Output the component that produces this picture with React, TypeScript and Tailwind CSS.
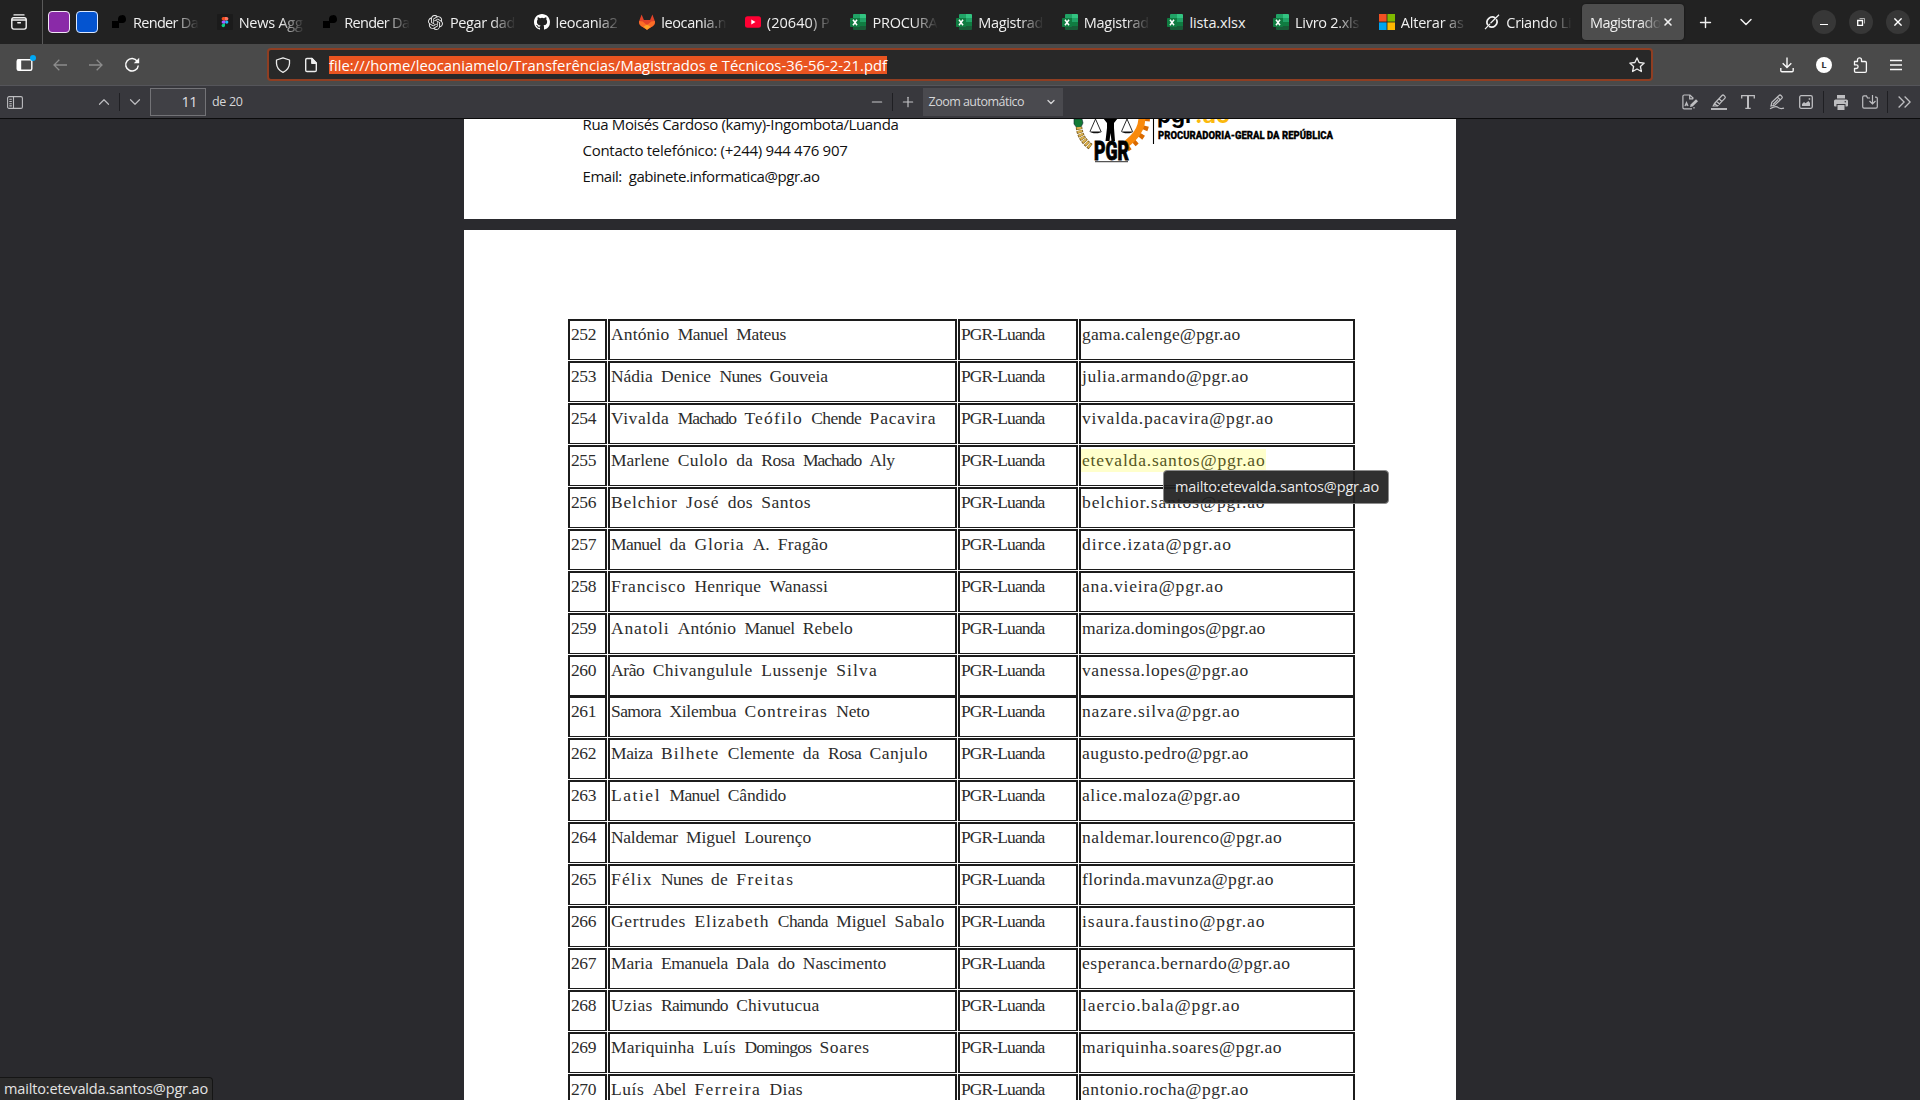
import React from "react";
import { Plus, Minus, ChevronDown, ChevronUp, X } from "lucide-react";

const UI = '"Open Sans", sans-serif';
const SERIF = '"Liberation Serif", serif';
const PITCH = 8.34;

let ctx: CanvasRenderingContext2D | null = null;

/** Letter spacing that makes `text` exactly `width` pixels wide. */
function tracking(text: string, size: number, family: string, width: number) {
  if (!ctx) ctx = document.createElement("canvas").getContext("2d");
  if (!ctx) return "0px";
  ctx.font = `${size}px ${family}`;
  return `${((width - ctx.measureText(text).width) / text.length).toFixed(3)}px`;
}

function Fit({ text, w, size = 14.5, family = UI, className = "" }: { text: string; w: number; size?: number; family?: string; className?: string }) {
  return (
    <span
      className={`whitespace-pre ${className}`}
      style={{ fontFamily: family, fontSize: `${size}px`, letterSpacing: tracking(text, size, family, w) }}
    >
      {text}
    </span>
  );
}

/** Fixed pitch serif text: each word occupies a whole number of character cells. */
function Mono({ text }: { text: string }) {
  const parts = text.split(/( )/);
  return (
    <span className="whitespace-pre">
      {parts.map((p, i) => (
        <Fit key={i} text={p} w={p.length * PITCH} size={17.5} family={SERIF} />
      ))}
    </span>
  );
}

/* ---------- tab icons ---------- */
const RenderIcon = () => (
  <svg viewBox="0 0 16 16" className="size-4"><path d="M1 7h6V5a4 4 0 1 1 5 4h-4v5H1z" fill="#000" /></svg>
);
const FigmaIcon = () => (
  <svg viewBox="0 0 16 16" className="size-4">
    <rect width="16" height="16" rx="1" fill="#1b1b1b" />
    <path d="M8 3H6.3a1.7 1.7 0 0 0 0 3.4H8z" fill="#f24e1e" />
    <path d="M8 3h1.7a1.7 1.7 0 0 1 0 3.4H8z" fill="#ff7262" />
    <path d="M8 6.4H6.3a1.7 1.7 0 0 0 0 3.4H8z" fill="#a259ff" />
    <circle cx="9.7" cy="8.1" r="1.7" fill="#1abcfe" />
    <path d="M6.3 9.8H8v1.7a1.7 1.7 0 1 1-1.7-1.7z" fill="#0acf83" />
  </svg>
);
const GptIcon = () => (
  <svg viewBox="0 0 24 24" className="size-[15px]" fill="#e8e8e8">
    <path d="M22.28 9.82a5.98 5.98 0 0 0-.52-4.91 6.05 6.05 0 0 0-6.51-2.9A6.07 6.07 0 0 0 4.98 4.18a5.98 5.98 0 0 0-4 2.9 6.05 6.05 0 0 0 .74 7.1 5.98 5.98 0 0 0 .51 4.91 6.05 6.05 0 0 0 6.51 2.9A5.98 5.98 0 0 0 13.26 24a6.06 6.06 0 0 0 5.77-4.21 5.99 5.99 0 0 0 4-2.9 6.06 6.06 0 0 0-.75-7.07zm-9.02 12.61a4.48 4.48 0 0 1-2.88-1.04l.14-.08 4.78-2.76a.79.79 0 0 0 .39-.68v-6.74l2.02 1.17a.07.07 0 0 1 .04.05v5.58a4.5 4.5 0 0 1-4.49 4.5zM3.6 18.3a4.47 4.47 0 0 1-.54-3.01l.14.08 4.78 2.76a.77.77 0 0 0 .78 0l5.84-3.37v2.33a.08.08 0 0 1-.03.06L9.74 19.95A4.5 4.5 0 0 1 3.6 18.3zM2.34 7.9a4.49 4.49 0 0 1 2.37-1.98V11.6a.77.77 0 0 0 .39.68l5.81 3.35-2.02 1.17a.08.08 0 0 1-.07 0l-4.83-2.79A4.5 4.5 0 0 1 2.34 7.87zm16.6 3.86-5.84-3.39L15.12 7.2a.08.08 0 0 1 .07 0l4.83 2.79a4.49 4.49 0 0 1-.68 8.1v-5.68a.79.79 0 0 0-.4-.65zm2-3.03-.14-.08-4.77-2.78a.78.78 0 0 0-.79 0L9.41 9.23V6.9a.07.07 0 0 1 .03-.06l4.83-2.79a4.5 4.5 0 0 1 6.68 4.66zM8.31 12.86 6.29 11.7a.08.08 0 0 1-.04-.06V6.07a4.5 4.5 0 0 1 7.38-3.45l-.14.08L8.7 5.46a.79.79 0 0 0-.39.68zm1.1-2.37L12.01 9l2.61 1.5v3l-2.6 1.5-2.61-1.5z" />
  </svg>
);
const GithubIcon = () => (
  <svg viewBox="0 0 16 16" className="size-4" fill="#fff">
    <path d="M8 0C3.58 0 0 3.58 0 8c0 3.54 2.29 6.53 5.47 7.59.4.07.55-.17.55-.38 0-.19-.01-.82-.01-1.49-2.01.37-2.53-.49-2.69-.94-.09-.23-.48-.94-.82-1.13-.28-.15-.68-.52-.01-.53.63-.01 1.08.58 1.23.82.72 1.21 1.87.87 2.33.66.07-.52.28-.87.51-1.07-1.78-.2-3.64-.89-3.64-3.95 0-.87.31-1.59.82-2.15-.08-.2-.36-1.02.08-2.12 0 0 .67-.21 2.2.82a7.6 7.6 0 0 1 4 0c1.53-1.04 2.2-.82 2.2-.82.44 1.1.16 1.92.08 2.12.51.56.82 1.27.82 2.15 0 3.07-1.87 3.75-3.65 3.95.29.25.54.73.54 1.48 0 1.07-.01 1.93-.01 2.2 0 .21.15.46.55.38A8.01 8.01 0 0 0 16 8c0-4.42-3.58-8-8-8z" />
  </svg>
);
const GitlabIcon = () => (
  <svg viewBox="0 0 16 16" className="size-4">
    <path d="M2.6.6 4.9 6h6.2L13.4.6 15.8 7q.8 3-1.8 5l-6 3.8L2 12Q-.6 10 .2 7z" fill="#e24329" />
    <path d="m.2 7 3.6.5L8 11.3l4.200-3.800 3.600-.5q.8 3-1.800 5L8 15.800 2 12Q-.6 10 .2 7z" fill="#fc6d26" />
    <path d="M4.500 12.800 8 10.500l3.500 2.300L8 15.800z" fill="#fca326" />
  </svg>
);
const YoutubeIcon = () => (
  <svg viewBox="0 0 16 16" className="size-4">
    <rect y="2.300" width="16" height="11.400" rx="2.500" fill="#f03" />
    <path d="M6.300 5.600v4.800L10.500 8z" fill="#fff" />
  </svg>
);
const ExcelIcon = () => (
  <svg viewBox="0 0 16 16" className="size-4">
    <path d="M4 0h6v4H3V1q0-1 1-1z" fill="#21a366" />
    <path d="M10 0h5q1 0 1 1v3h-6z" fill="#33c481" />
    <path d="M3 4h7v4H3z" fill="#107c41" />
    <path d="M10 4h6v4h-6z" fill="#21a366" />
    <path d="M3 8h7v8H4q-1 0-1-1z" fill="#185c37" />
    <path d="M10 8h6v4h-6z" fill="#107c41" />
    <path d="M10 12h6v3q0 1-1 1h-5z" fill="#185c37" />
    <rect y="4" width="10" height="9" rx=".8" fill="#107c41" />
    <path d="m3 5.800 4 5.400M7 5.800l-4 5.400" stroke="#fff" strokeWidth="1.500" />
  </svg>
);
const MicrosoftIcon = () => (
  <svg viewBox="0 0 16 16" className="size-4">
    <path d="M0 0h7.600v7.600H0z" fill="#f25022" />
    <path d="M8.400 0H16v7.600H8.400z" fill="#7fba00" />
    <path d="M0 8.400h7.600V16H0z" fill="#00a4ef" />
    <path d="M8.400 8.400H16V16H8.400z" fill="#ffb900" />
  </svg>
);
const GrokIcon = () => (
  <svg viewBox="0 0 16 16" className="size-4" fill="none" stroke="#f2f2f2" strokeWidth="1.700">
    <path d="M11.300 4A5.300 5.300 0 0 0 3.900 11.300M4.900 12.300A5.300 5.300 0 0 0 12.300 5.200" />
    <path d="M1 15.200 6 9.800M6.500 9.200 15 .8" strokeWidth="1.200" />
  </svg>
);

const tabs: { icon: () => React.ReactElement; text: string; w: number }[] = [
  { icon: RenderIcon, text: "Render Da", w: 65 },
  { icon: FigmaIcon, text: "News Agg", w: 64 },
  { icon: RenderIcon, text: "Render Da", w: 65 },
  { icon: GptIcon, text: "Pegar dad", w: 65 },
  { icon: GithubIcon, text: "leocania2", w: 62 },
  { icon: GitlabIcon, text: "leocania.n", w: 65 },
  { icon: YoutubeIcon, text: "(20640) P", w: 63 },
  { icon: ExcelIcon, text: "PROCURA", w: 65 },
  { icon: ExcelIcon, text: "Magistrad", w: 65 },
  { icon: ExcelIcon, text: "Magistrad", w: 65 },
  { icon: ExcelIcon, text: "lista.xlsx", w: 56 },
  { icon: ExcelIcon, text: "Livro 2.xls", w: 64 },
  { icon: MicrosoftIcon, text: "Alterar as", w: 63 },
  { icon: GrokIcon, text: "Criando Li", w: 65 },
];

function TabBar() {
  return (
    <div className="flex h-11 items-center bg-[#222] text-[#f0f0f0]">
      <div className="flex h-11 w-[43px] items-center justify-center border-r border-[#5a5a5a] pr-1">
        <svg viewBox="0 0 16 16" className="size-4" fill="none" stroke="#f4f4f4" strokeWidth="1.400" strokeLinecap="round">
          <path d="M3 .9h10" />
          <rect x=".8" y="3.800" width="14.400" height="11.300" rx="2" />
          <path d="M1 6h14M6.800 8.800h2.600" />
        </svg>
      </div>
      <div className="ml-[5px] size-[22px] rounded-[4px] border border-[#f0e6f5] bg-[#8a2aa8]" />
      <div className="ml-1.5 size-[22px] rounded-[4px] border border-[#dbe8ff] bg-[#0454d0]" />
      <div className="ml-[13px] flex">
        {tabs.map((t, i) => (
          <div key={i} className="flex h-11 w-[105.650px] items-center">
            <div className="flex w-4 shrink-0 justify-center"><t.icon /></div>
            <div className={`ml-1.5 w-[66px] overflow-hidden leading-5 ${t.text === "lista.xlsx" ? "" : "[mask-image:linear-gradient(to_right,black_62%,transparent_100%)]"}`}>
              <Fit text={t.text} w={t.w} />
            </div>
          </div>
        ))}
      </div>
      <div className="ml-[-8px] flex h-9 w-[102px] shrink-0 items-center rounded-[4px] bg-[#4d4d4d] pl-2 shadow-[0_0_2px_rgba(0,0,0,0.600)]">
        <div className="w-[71px] overflow-hidden leading-5 [mask-image:linear-gradient(to_right,black_72%,transparent_100%)]">
          <Fit text="Magistrado" w={71} />
        </div>
        <X className="ml-px size-3" strokeWidth={3.200} />
      </div>
      <div className="flex w-[43px] justify-center"><Plus className="size-[17px]" strokeWidth={2} /></div>
      <div className="flex w-[38px] justify-center"><ChevronDown className="size-[20px]" strokeWidth={1.800} /></div>
      <div className="ml-[47px] flex gap-[13px]">
        <div className="flex size-6 items-center justify-center rounded-full bg-[#373737]"><div className="mt-[5px] h-px w-2 bg-white" /></div>
        <div className="flex size-6 items-center justify-center rounded-full bg-[#373737]">
          <svg viewBox="0 0 8 8" className="size-2" fill="none" stroke="#fff"><path d="M.7 2.500h4.800v4.800H.7z" strokeWidth="1.300" /><path d="M2.500.5h5v5" strokeWidth="1" opacity=".6" /></svg>
        </div>
        <div className="flex size-6 items-center justify-center rounded-full bg-[#373737]">
          <svg viewBox="0 0 8 8" className="size-2" stroke="#fff" strokeWidth="1.400"><path d="m.4.4 7.200 7.200M7.600.4.4 7.600" /></svg>
        </div>
      </div>
    </div>
  );
}

function NavBar() {
  return (
    <div className="flex h-[41px] items-center bg-[#4a4a4a]">
      <div className="flex w-[50px] justify-center pl-0.5">
        <svg viewBox="0 0 20 17" className="mb-[3px] h-[17px] w-5" fill="none">
          <rect x="1.200" y="4.700" width="14.600" height="10.600" rx="1.500" stroke="#fff" strokeWidth="1.400" />
          <path d="M1 4.700h4.200v10.600H1z" fill="#fff" />
          <circle cx="17" cy="3" r="3" fill="#00a8f5" />
        </svg>
      </div>
      <svg viewBox="0 0 14 12" className="ml-[3px] h-3 w-3.5" fill="none" stroke="#8c8c8c" strokeWidth="1.300"><path d="M14 6H1M6.300.8 1 6l5.300 5.200" /></svg>
      <svg viewBox="0 0 14 12" className="ml-[22px] h-3 w-3.5" fill="none" stroke="#8c8c8c" strokeWidth="1.300"><path d="M0 6h13M7.700.8 13 6l-5.300 5.200" /></svg>
      <svg viewBox="0 0 16 16" className="ml-[21px] size-4" fill="none" stroke="#fbfbfb" strokeWidth="1.500"><path d="M13.300 4.300A6.300 6.300 0 1 0 14.300 8.500" /><path d="M15.200.8v5.400H9.800z" fill="#fbfbfb" stroke="none" /></svg>
      <div className="ml-[127px] flex h-[33px] w-[1386px] items-center rounded-[4px] border-2 border-[#8f3e22] bg-[#282828]">
        <svg viewBox="0 0 16 16" className="ml-[6px] size-4" fill="none" stroke="#ececec" strokeWidth="1.300" strokeLinejoin="round"><path d="M8 .8 14.500 3v3.500q-.3 6-6.500 8.800Q1.800 12.500 1.500 6.500V3z" /></svg>
        <svg viewBox="0 0 16 16" className="ml-3 size-4" fill="none" stroke="#ececec" strokeWidth="1.400" strokeLinejoin="round"><path d="M9 1.500H4Q2.700 1.500 2.700 2.800v10.400Q2.700 14.500 4 14.500h8q1.300 0 1.300-1.300V6z" /><path d="M8.800 1.500V6.200h4.500z" fill="#ececec" /></svg>
        <div className="ml-[10px] flex h-[18px] items-center bg-[#e95420] leading-[18px] text-white">
          <Fit text="file:///home/leocaniamelo/Transferências/Magistrados e Técnicos-36-56-2-21.pdf" w={558} size={14.800} />
        </div>
        <svg viewBox="0 0 16 16" className="ml-auto mr-[6px] size-4" fill="none" stroke="#ececec" strokeWidth="1.300" strokeLinejoin="round"><path d="m8 .9 2.100 4.600 5.100.6-3.800 3.400 1 5L8 12l-4.400 2.500 1-5L.8 6.100l5.100-.6z" /></svg>
      </div>
      <svg viewBox="0 0 14 16" className="ml-[127px] h-4 w-3.5" fill="none" stroke="#f8f8f8" strokeWidth="1.400"><path d="M7 .5v10M2.700 6.300 7 10.600l4.300-4.300M.8 11v2.500q0 1.200 1.200 1.200h10q1.200 0 1.200-1.200V11" /></svg>
      <div className="ml-[22px] flex size-4 items-center justify-center rounded-full bg-white text-[9.500px] font-bold leading-none text-[#333]">L</div>
      <svg viewBox="0 0 16 16" className="ml-5 size-4" fill="none" stroke="#f8f8f8" strokeWidth="1.300" strokeLinejoin="round"><path d="M5.500 4.500V2.800a2 2 0 0 1 4 0v1.700h3.700q1.200 0 1.200 1.200v8.400q0 1.200-1.200 1.200H3.700q-1.200 0-1.200-1.200v-2.600h1.800a1.600 1.600 0 0 0 0-3.600H2.500V4.500z" /></svg>
      <svg viewBox="0 0 12 12" className="ml-[22px] h-3 w-3" stroke="#f8f8f8" strokeWidth="1.300"><path d="M0 1.500h12M0 6h12M0 10.500h12" /></svg>
    </div>
  );
}

const Sep = ({ className = "" }: { className?: string }) => <div className={`h-[18px] w-px bg-[#1f1f23] ${className}`} />;

function PdfToolbar() {
  return (
    <div className="flex h-[34px] items-center border-b border-t border-b-[#0c0c0d] border-t-[#55555a] bg-[#38383d] text-[#d6d6d8]">
      <svg viewBox="0 0 16 13" className="ml-[7px] h-[13px] w-4" fill="none" stroke="#bcbcbf" strokeWidth="1.100"><rect x=".6" y=".6" width="14.800" height="11.800" rx="1.500" /><path d="M6.500.6v11.800M2.300 3.300h2.500M2.300 5.500h2.500M2.300 7.700h2.500M2.300 9.900h2.500" /></svg>
      <ChevronUp className="ml-[72px] size-[18px] text-[#bcbcbf]" strokeWidth={1.600} />
      <Sep className="ml-[6px]" />
      <ChevronDown className="ml-[6px] size-[18px] text-[#bcbcbf]" strokeWidth={1.600} />
      <div className="ml-[6px] flex h-7 w-14 items-center justify-end border border-[#737377] bg-[#404045] pr-2 text-[#dfdfe1]">
        <Fit text="11" w={15.500} size={14.500} />
      </div>
      <Fit text="de 20" w={30.500} size={12.500} className="ml-1.5" />
      <Minus className="ml-[626px] size-[16px] text-[#c6c6c9]" strokeWidth={1.700} />
      <Sep className="ml-[7px]" />
      <Plus className="ml-[7px] size-[16px] text-[#c6c6c9]" strokeWidth={1.700} />
      <div className="ml-[7px] flex h-7 w-[140px] items-center justify-between bg-[#4a4a4f] pl-1.5 pr-[6px]">
        <Fit text="Zoom automático" w={95.500} size={12.500} />
        <ChevronDown className="size-3" strokeWidth={2.600} />
      </div>
      <div className="ml-auto flex items-center text-[#bebec1]">
        <svg viewBox="0 0 16 16" className="size-4" fill="none" stroke="currentColor" strokeWidth="1.200"><path d="M10 14.800H2.200Q.9 14.800.9 13.500V2.300Q.9 1 2.200 1H8l3.500 3.500M7.700 1v3.800h3.500" /><path d="M3 12l1.500-3.500L6 12M3 11h3" /><path d="M8 13l.6-2.400L14 5.200l2 2-5.400 5.200z" fill="currentColor" stroke="none" /><path d="M12 14.500V13" /></svg>
        <svg viewBox="0 0 16 16" className="ml-[13px] size-4" fill="none" stroke="currentColor" strokeWidth="1.200"><path d="M3.500 9.500 11 1.500q1-1 2 0l.8.800q1 1 0 2L6.500 12zM5.500 7.300 9 10.500M8 4.800l3.200 3M3.500 9.500 2.200 12h4" /><path d="M0 15h16" strokeWidth="1.900" /></svg>
        <svg viewBox="0 0 14 14" className="ml-3.5 size-3.5" fill="none" stroke="currentColor" strokeWidth="1.300"><path d="M.7 3.500V.7h12.600v2.800M7 .7v12.600M4.300 13.300h5.400" /><path d="M7 1v12" strokeWidth="2" /></svg>
        <svg viewBox="0 0 16 16" className="ml-3.5 size-4" fill="none" stroke="currentColor" strokeWidth="1.200"><path d="m2 12 .8-3.700L10 1.500q1-1 2 0l.8.800q1 1 0 2L5.700 11.300zM8.500 3.200l2.700 2.600M4 10.500l5-5" /><path d="M1 14.800q6-3.500 8-1.500t6 .8" /></svg>
        <svg viewBox="0 0 14 14" className="ml-3.5 size-3.5" fill="none" stroke="currentColor" strokeWidth="1.300"><rect x=".7" y=".7" width="12.600" height="12.600" rx="1.500" /><path d="M3 11V9l2-2 1.500 1.200L9.500 6 11 8v3z" fill="currentColor" stroke="none" /><path d="M9.700 3.200h1.500v1.500H9.700z" fill="currentColor" stroke="none" /></svg>
        <Sep className="ml-2.5 h-[22px]" />
        <svg viewBox="0 0 14 15" className="ml-2.5 h-[15px] w-3.5" fill="currentColor"><path d="M3 0h8v3.500H3zM1.500 4.500h11Q14 4.500 14 6v4.500q0 1-1 1h-1.500V9h-9v2.500H1q-1 0-1-1V6q0-1.500 1.500-1.500z" /><path d="M3.500 10h7v5h-7z" /><circle cx="11.300" cy="6.700" r=".8" fill="#38383d" /></svg>
        <svg viewBox="0 0 16 14" className="ml-3.5 h-3.5 w-4" fill="none" stroke="currentColor" strokeWidth="1.200"><path d="M8 3H5.500L4.500.9H2Q.7.900.7 2.200v9.600Q.7 13.100 2 13.100h12q1.300 0 1.300-1.300V3.500q0-1.300-1.300-1.300h-1M10.500 0v8.500M7.500 6l3 3 3-3" /></svg>
        <Sep className="ml-[9px] h-[22px]" />
        <svg viewBox="0 0 13 12" className="ml-2.5 mr-[9px] h-3 w-[13px]" fill="none" stroke="currentColor" strokeWidth="1.300"><path d="m.6.5 5.500 5.500L.6 11.500M6.600.5l5.500 5.500-5.500 5.500" /></svg>
      </div>
    </div>
  );
}

function PgrLogo() {
  return (
    <svg viewBox="0 0 270 46" className="h-[46px] w-[270px] shrink-0">
      {/* wheat and leaves */}
      <path d="M4 0h8l1 4-2 4-4 1-3-4z" fill="#127a35" stroke="#123" strokeWidth=".6" />
      <path d="M9 8q1 12 12 20" fill="none" stroke="#7a5a1c" strokeWidth="6.500" strokeDasharray="2.600 .9" />
      <path d="M9 8q1 12 12 20" fill="none" stroke="#d9b04e" strokeWidth="4.800" strokeDasharray="2.200 1.300" />
      {/* gear */}
      <path d="M75 -2Q75 12 65 21 61 25 56 28" fill="none" stroke="#d96a00" strokeWidth="10" strokeDasharray="4 4.500" />
      <path d="M72 -2Q72 10 63 19 60 22 55 26" fill="none" stroke="#f98a0c" strokeWidth="7" />
      {/* figure and scales */}
      <path d="M33 -1h15l-4 5v5l1 13h-3.500l-1-8-1 8H35.500L37 9V4z" fill="#000" />
      <g fill="none" stroke="#111" strokeWidth=".9">
        <path d="M25.500 0 20 12.500M25.500 0l5.500 12.500M57 0l-5.500 12.500M57 0l5.500 12.500" />
      </g>
      <path d="M19.500 12.500h12.500q-1.500 1.800-6.200 1.800t-6.300-1.800zM51 12.500h12.500q-1.500 1.800-6.200 1.800T51 12.500z" fill="#111" />
      <text x="24" y="41" fontFamily="Roboto" fontWeight="900" fontSize="25" textLength="35" lengthAdjust="spacingAndGlyphs" stroke="#000" strokeWidth=".8">PGR</text>
      <path d="M25 42.600h33" stroke="#555" strokeWidth="1.200" />
      <path d="M83.500 0v25" stroke="#000" strokeWidth="1.100" />
      <text x="87" y="4" fontFamily="Inter" fontWeight="700" fontSize="23" textLength="37" lengthAdjust="spacingAndGlyphs">pgr</text>
      <text x="125" y="4" fontFamily="Inter" fontWeight="700" fontSize="23" textLength="35" lengthAdjust="spacingAndGlyphs" fill="#fbb90d">.ao</text>
      <text x="88" y="20" fontFamily="Roboto" fontWeight="900" fontSize="11.300" textLength="175" lengthAdjust="spacingAndGlyphs" stroke="#000" strokeWidth=".3">PROCURADORIA-GERAL DA REPÚBLICA</text>
    </svg>
  );
}

const rows: [string, string, string][] = [
  ["252", "António Manuel Mateus", "gama.calenge@pgr.ao"],
  ["253", "Nádia Denice Nunes Gouveia", "julia.armando@pgr.ao"],
  ["254", "Vivalda Machado Teófilo Chende Pacavira", "vivalda.pacavira@pgr.ao"],
  ["255", "Marlene Culolo da Rosa Machado Aly", "etevalda.santos@pgr.ao"],
  ["256", "Belchior José dos Santos", "belchior.santos@pgr.ao"],
  ["257", "Manuel da Gloria A. Fragão", "dirce.izata@pgr.ao"],
  ["258", "Francisco Henrique Wanassi", "ana.vieira@pgr.ao"],
  ["259", "Anatoli António Manuel Rebelo", "mariza.domingos@pgr.ao"],
  ["260", "Arão Chivangulule Lussenje Silva", "vanessa.lopes@pgr.ao"],
  ["261", "Samora Xilembua Contreiras Neto", "nazare.silva@pgr.ao"],
  ["262", "Maiza Bilhete Clemente da Rosa Canjulo", "augusto.pedro@pgr.ao"],
  ["263", "Latiel Manuel Cândido", "alice.maloza@pgr.ao"],
  ["264", "Naldemar Miguel Lourenço", "naldemar.lourenco@pgr.ao"],
  ["265", "Félix Nunes de Freitas", "florinda.mavunza@pgr.ao"],
  ["266", "Gertrudes Elizabeth Chanda Miguel Sabalo", "isaura.faustino@pgr.ao"],
  ["267", "Maria Emanuela Dala do Nascimento", "esperanca.bernardo@pgr.ao"],
  ["268", "Uzias Raimundo Chivutucua", "laercio.bala@pgr.ao"],
  ["269", "Mariquinha Luís Domingos Soares", "mariquinha.soares@pgr.ao"],
  ["270", "Luís Abel Ferreira Dias", "antonio.rocha@pgr.ao"],
];

const cell = "h-[41px] border-2 border-b-[1.500px] border-[#1c1c1c] pl-[1px] pt-[1px] leading-[24px] text-[#2c2c2c]";

function Row({ row }: { row: [string, string, string] }) {
  const active = row[0] === "255";
  return (
    <div className="flex h-[41.940px] gap-px">
      <div className={`${cell} w-[39px]`}><Mono text={row[0]} /></div>
      <div className={`${cell} w-[349px]`}><Mono text={row[1]} /></div>
      <div className={`${cell} w-[120px]`}><Mono text="PGR-Luanda" /></div>
      <div className={`${cell} relative w-[276px]`}>
        <Mono text={row[2]} />
        {active && (
          <>
            <div className="absolute left-0 top-[2px] h-[23px] w-[185px] bg-[rgba(255,255,0,0.200)]" />
            <div className="absolute left-[82px] top-[23px] z-10 flex h-[34px] w-[226px] items-center rounded-[4px] border border-[#8d8d8d] bg-[rgba(32,32,32,0.930)] pl-[11px] text-[#ececec]">
              <Fit text="mailto:etevalda.santos@pgr.ao" w={204} size={14.500} />
            </div>
          </>
        )}
      </div>
    </div>
  );
}

export default function App() {
  return (
    <div className="relative flex h-[1100px] w-[1920px] flex-col overflow-hidden bg-[#2a2a2e] font-['Open_Sans',sans-serif]">
      <TabBar />
      <NavBar />
      <PdfToolbar />
      <div className="flex h-[981px] flex-col items-center gap-[11px] overflow-hidden">
        <div className="flex h-[100px] w-[992px] shrink-0 justify-between overflow-hidden bg-white pl-[118.500px] pr-[116px] text-[#111]">
          <div className="mt-[-8px] flex flex-col leading-[26px]">
            <Fit text="Rua Moisés Cardoso (kamy)-Ingombota/Luanda" w={316} size={15} />
            <Fit text="Contacto telefónico: (+244) 944 476 907" w={265} size={15} />
            <Fit text="Email:  gabinete.informatica@pgr.ao" w={237} size={15} />
          </div>
          <PgrLogo />
        </div>
        <div className="w-[992px] shrink-0 bg-white pl-[104px] pt-[89px]">
          {rows.map((r) => <Row key={r[0]} row={r} />)}
        </div>
      </div>
      <div className="absolute bottom-0 left-0 flex h-[23px] w-[213px] items-center rounded-tr-[4px] border-r border-t border-[#151515] bg-[#2c2c2c] pl-1 text-[#e4e4e4]">
        <Fit text="mailto:etevalda.santos@pgr.ao" w={204} size={14.500} />
      </div>
    </div>
  );
}
